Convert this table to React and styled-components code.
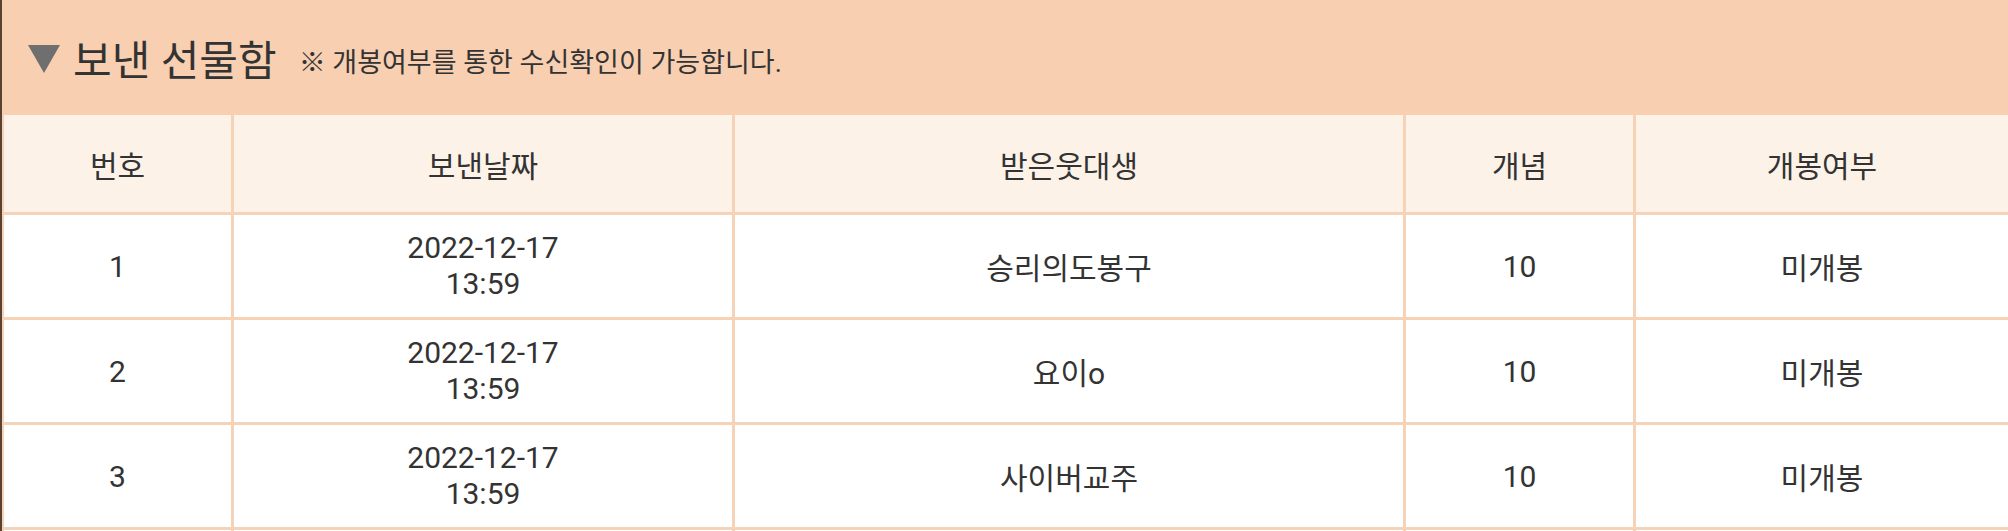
import React from "react"
import styled, { createGlobalStyle } from "styled-components"

const GlobalStyle = createGlobalStyle`
  body {
    margin: 0;
    background: #ffffff;
    font-family: Roboto, "Noto Sans CJK KR", sans-serif;
    color: #333333;
  }
`

const columns = ["번호", "보낸날짜", "받은웃대생", "개념", "개봉여부"]

const gifts = [
  { no: 1, date: "2022-12-17", time: "13:59", to: "승리의도봉구", amount: 10, state: "미개봉" },
  { no: 2, date: "2022-12-17", time: "13:59", to: "요이o", amount: 10, state: "미개봉" },
  { no: 3, date: "2022-12-17", time: "13:59", to: "사이버교주", amount: 10, state: "미개봉" },
]

function App() {
  return (
    <>
      <GlobalStyle />
      <Wrapper>
        <Heading>
          <Triangle />
          <Title>보낸 선물함</Title>
          <Notice>※ 개봉여부를 통한 수신확인이 가능합니다.</Notice>
        </Heading>
        <Table>
          {columns.map((c) => (
            <HeadCell key={c}>{c}</HeadCell>
          ))}
          {gifts.map((g) => (
            <React.Fragment key={g.no}>
              <Cell>{g.no}</Cell>
              <Cell>
                <DateText>
                  {g.date}
                  <br />
                  {g.time}
                </DateText>
              </Cell>
              <Cell>{g.to}</Cell>
              <Cell>{g.amount}</Cell>
              <Cell>{g.state}</Cell>
            </React.Fragment>
          ))}
          {columns.map((c) => (
            <Cell key={"empty-" + c} />
          ))}
        </Table>
      </Wrapper>
    </>
  )
}

export default App

const Wrapper = styled.div`
  border-left: 2px solid #5a4232;
  min-height: 531px;
`

const Heading = styled.div`
  height: 115px;
  background: #f8cfb1;
  display: flex;
  align-items: center;
  padding-left: 26px;
  box-sizing: border-box;
`

const Triangle = styled.span`
  width: 0;
  height: 0;
  border-left: 16px solid transparent;
  border-right: 16px solid transparent;
  border-top: 28px solid #6f6f6f;
  margin-right: 13px;
  margin-top: 3px;
`

const Title = styled.h2`
  margin: 0;
  font-size: 42px;
  font-weight: 400;
  color: #333333;
`

const Notice = styled.span`
  margin-left: 22px;
  margin-top: 6px;
  font-size: 27px;
  color: #333333;
`

const Table = styled.div`
  display: grid;
  grid-template-columns: 227px 498px 668px 227px 1fr;
  grid-auto-rows: 102px;
  grid-template-rows: 97px;
  gap: 3px;
  padding-left: 2px;
  background: #f6d3b6;
`

const HeadCell = styled.div`
  background: #fcf2e8;
  display: flex;
  align-items: center;
  justify-content: center;
  font-size: 30px;
  color: #333333;
`

const Cell = styled.div`
  background: #ffffff;
  display: flex;
  align-items: center;
  justify-content: center;
  font-size: 30px;
  color: #333333;
`

const DateText = styled.div`
  text-align: center;
  line-height: 36px;
`
